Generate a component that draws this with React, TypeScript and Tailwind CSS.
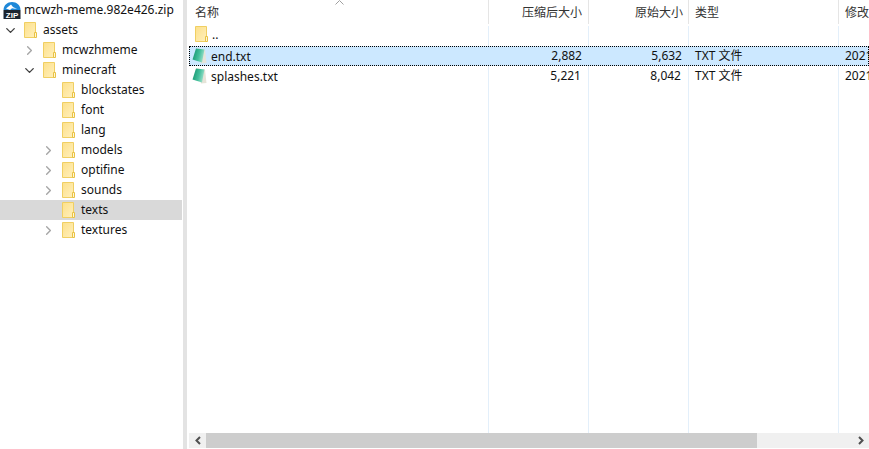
import { ChevronDown, ChevronRight } from "lucide-react";

const FONT = "font-['Noto_Sans','Noto_Sans_CJK_SC',sans-serif]";

type TreeItem = {
  name: string;
  level: number;
  arrow?: "open" | "closed";
  active?: boolean;
};

const tree: TreeItem[] = [
  { name: "assets", level: 0, arrow: "open" },
  { name: "mcwzhmeme", level: 1, arrow: "closed" },
  { name: "minecraft", level: 1, arrow: "open" },
  { name: "blockstates", level: 2 },
  { name: "font", level: 2 },
  { name: "lang", level: 2 },
  { name: "models", level: 2, arrow: "closed" },
  { name: "optifine", level: 2, arrow: "closed" },
  { name: "sounds", level: 2, arrow: "closed" },
  { name: "texts", level: 2, active: true },
  { name: "textures", level: 2, arrow: "closed" },
];

const FolderIcon = () => (
  <svg width="13" height="16" viewBox="0 0 13 16" className="shrink-0">
    <defs>
      <linearGradient id="folderFill" x1="0" y1="0" x2="1" y2="1">
        <stop offset="0" stopColor="#fde08a" />
        <stop offset="1" stopColor="#fff0bd" />
      </linearGradient>
    </defs>
    <path d="M.5 .5H11.5V15.5H.5Z" fill="url(#folderFill)" stroke="#f0cf62" />
    <path d="M10.5 10.5H12.5V15.5H10.5Z" fill="#fff6d6" stroke="#e9c244" />
  </svg>
);

const ZipIcon = () => (
  <svg width="18" height="18" viewBox="0 0 18 18" className="shrink-0">
    <path d="M.5 9C.5 4 4.5 1 9 1S17.5 4 17.5 9Z" fill="#1e88d8" />
    <path d="M3 7.5L8 3.5L10 6L14 8L9 7.3L7 9Z" fill="#fff" />
    <rect x=".5" y="9" width="17" height="9" fill="#1a2430" />
    <text
      x="9"
      y="16.6"
      textAnchor="middle"
      fill="#fff"
      fontSize="8"
      fontWeight="700"
      fontFamily="Liberation Sans, sans-serif"
    >
      ZIP
    </text>
  </svg>
);

const TxtIcon = () => (
  <svg width="15" height="16" viewBox="0 0 15 16" className="shrink-0">
    <defs>
      <linearGradient id="txtFill" x1="0" y1="0.3" x2="1" y2="0.6">
        <stop offset="0" stopColor="#14956f" />
        <stop offset="0.55" stopColor="#45c09c" />
        <stop offset="1" stopColor="#a8e4d2" />
      </linearGradient>
    </defs>
    <path d="M5 .5L13 1.5L14.5 15L9 15.5Z" fill="#e6e4d8" />
    <path d="M4 .5L12.5 1.5L10 14.5L.5 11.5Z" fill="url(#txtFill)" />
  </svg>
);

const columns = [
  "w-[300px] pl-[6px]",
  "w-[100px] pr-[7px] text-right",
  "w-[100px] pr-[7px] text-right",
  "w-[150px] pl-[6px]",
  "flex-1 pl-[6px]",
];

const files = [
  { name: "end.txt", packed: "2,882", size: "5,632", selected: true },
  { name: "splashes.txt", packed: "5,221", size: "8,042", selected: false },
];

function FileRow({ file }: { file: (typeof files)[number] }) {
  const cell = "h-full leading-[19px] whitespace-nowrap overflow-hidden";
  const line = file.selected ? "" : "border-r border-[#e3effa]";
  return (
    <div
      className={
        file.selected
          ? "flex h-5 bg-[#cce8ff] outline-1 outline-dotted -outline-offset-1 outline-black"
          : "flex h-5"
      }
    >
      <div className={`${cell} ${columns[0]} ${line} flex items-center gap-[4px] !pl-[3px]`}>
        <TxtIcon />
        <span>{file.name}</span>
      </div>
      <div className={`${cell} ${columns[1]} ${line}`}>{file.packed}</div>
      <div className={`${cell} ${columns[2]} ${line}`}>{file.size}</div>
      <div className={`${cell} ${columns[3]} ${line}`}>TXT 文件</div>
      <div className={`${cell} ${columns[4]}`}>2021</div>
    </div>
  );
}

export default function App() {
  return (
    <div className={`${FONT} flex h-[449px] w-[869px] overflow-hidden bg-white text-[12px] text-[#111]`}>
      {/* tree */}
      <div className="w-[182px] shrink-0">
        <div className="flex h-5 items-center gap-[3px] pl-[3px]">
          <ZipIcon />
          <span className="whitespace-nowrap">mcwzh-meme.982e426.zip</span>
        </div>
        {tree.map((item) => (
          <div
            key={item.name}
            className={item.active ? "flex h-5 items-center bg-[#d9d9d9]" : "flex h-5 items-center"}
          >
            {item.level === 1 && <div className="w-[19px] shrink-0" />}
            {item.level === 2 && <div className="w-[38px] shrink-0" />}
            <div className="flex w-[24px] shrink-0 items-center justify-center pr-[3px]">
              {item.arrow === "open" && <ChevronDown size={15} strokeWidth={2.2} className="text-[#404040]" />}
              {item.arrow === "closed" && <ChevronRight size={15} strokeWidth={2.2} className="text-[#a6a6a6]" />}
            </div>
            <FolderIcon />
            <span className="ml-[6px]">{item.name}</span>
          </div>
        ))}
      </div>

      {/* splitter */}
      <div className="ml-px mr-[2px] w-1 shrink-0 bg-[#e3e3e3]" />

      {/* list */}
      <div className="flex min-w-0 flex-1 flex-col pb-px">
        <div className="relative flex h-[26px] shrink-0 text-[#333]">
          <div className={`${columns[0]} h-6 border-r border-[#e5e5e5] leading-[25px]`}>名称</div>
          <div className={`${columns[1]} !pr-[6px] h-6 border-r border-[#e5e5e5] leading-[25px]`}>压缩后大小</div>
          <div className={`${columns[2]} !pr-[5px] h-6 border-r border-[#e5e5e5] leading-[25px]`}>原始大小</div>
          <div className={`${columns[3]} h-6 border-r border-[#e5e5e5] leading-[25px]`}>类型</div>
          <div className={`${columns[4]} h-6 leading-[25px] whitespace-nowrap`}>修改</div>
          <svg width="9" height="5" viewBox="0 0 9 5" className="absolute left-[146px] top-0">
            <path d="M.5 4.5L4.5 .5L8.5 4.5" fill="none" stroke="#a0a0a0" />
          </svg>
        </div>
        <div className="flex h-5 shrink-0">
          <div className={`${columns[0]} flex items-start gap-[4px] border-r border-[#e3effa] !pl-[6px] leading-[18px]`}>
            <FolderIcon />
            <span>..</span>
          </div>
          <div className={`${columns[1]} border-r border-[#e3effa]`} />
          <div className={`${columns[2]} border-r border-[#e3effa]`} />
          <div className={`${columns[3]} border-r border-[#e3effa]`} />
        </div>
        {files.map((file) => (
          <FileRow key={file.name} file={file} />
        ))}
        <div className="flex min-h-0 flex-1">
          <div className={`${columns[0]} border-r border-[#e3effa]`} />
          <div className={`${columns[1]} border-r border-[#e3effa]`} />
          <div className={`${columns[2]} border-r border-[#e3effa]`} />
          <div className={`${columns[3]} border-r border-[#e3effa]`} />
        </div>
        {/* horizontal scrollbar */}
        <div className="flex h-[15px] shrink-0 items-center bg-[#f0f0f0]">
          <div className="flex w-[17px] shrink-0 justify-center">
            <svg width="6" height="9" viewBox="0 0 6 9">
              <path d="M5 1L1.5 4.5L5 8" fill="none" stroke="#505050" strokeWidth="2" />
            </svg>
          </div>
          <div className="h-full w-[551px] shrink-0 bg-[#cdcdcd]" />
          <div className="flex-1" />
          <div className="flex w-[17px] shrink-0 justify-center">
            <svg width="6" height="9" viewBox="0 0 6 9">
              <path d="M1 1L4.5 4.5L1 8" fill="none" stroke="#505050" strokeWidth="2" />
            </svg>
          </div>
        </div>
      </div>
    </div>
  );
}
